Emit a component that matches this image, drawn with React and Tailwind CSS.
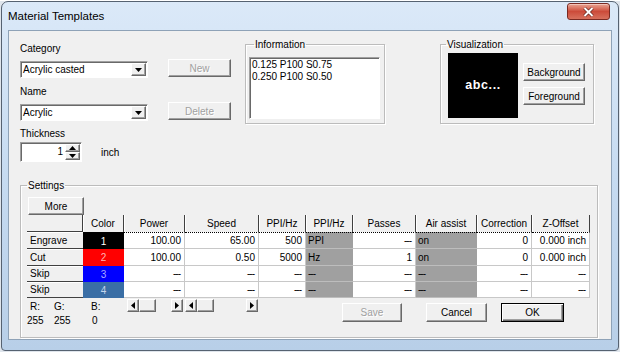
import React from 'react';

const raised =
  'bg-[#f0f0f0] border border-t-white border-l-white border-r-[#696969] border-b-[#696969] shadow-[inset_-1px_-1px_0_#a0a0a0]';
const sunken =
  'border border-t-[#a0a0a0] border-l-[#a0a0a0] border-r-white border-b-white shadow-[inset_1px_1px_0_#696969]';
const disabledText = 'text-[#a0a0a0] [text-shadow:1px_1px_0_#fff]';

const Tri = ({ dir = 'down' }) => {
  const pts = {
    down: '0,0 7,0 3.5,4',
    up: '0,4 7,4 3.5,0',
    left: '4,0 4,7 0,3.5',
    right: '0,0 0,7 4,3.5',
  }[dir];
  const vertical = dir === 'down' || dir === 'up';
  return (
    <svg width={vertical ? 7 : 4} height={vertical ? 4 : 7} viewBox={vertical ? '0 0 7 4' : '0 0 4 7'}>
      <polygon points={pts} fill="#000" />
    </svg>
  );
};

const Combo = ({ value }) => (
  <div className={`flex items-center w-[128px] h-[17px] bg-white ${sunken}`}>
    <span className="flex-1 pl-[2px] leading-[13px]">{value}</span>
    <div className={`flex items-center justify-center w-[15px] h-[13px] mr-[1px] ${raised}`}>
      <Tri dir="down" />
    </div>
  </div>
);

const Btn = ({ children, w, h = 18, disabled, className = '' }) => (
  <div
    className={`flex items-center justify-center leading-[13px] ${raised} ${disabled ? disabledText : ''} ${className}`}
    style={{ width: w, height: h }}
  >
    {children}
  </div>
);

const HScroll = ({ w }) => (
  <div className="flex h-[13px] bg-[#f0f0f0]" style={{ width: w }}>
    <div className={`flex items-center justify-center w-[12px] h-[13px] ${raised}`}>
      <Tri dir="left" />
    </div>
    <div className={`w-[17px] h-[13px] ${raised}`} />
    <div className="flex-1" />
    <div className={`flex items-center justify-center w-[12px] h-[13px] ${raised}`}>
      <Tri dir="right" />
    </div>
  </div>
);

const headers = ['Color', 'Power', 'Speed', 'PPI/Hz', 'PPI/Hz', 'Passes', 'Air assist', 'Correction', 'Z-Offset'];

const dash = '---';
const rows = [
  { name: 'Engrave', bg: 'bg-black', num: '1', fg: 'text-white', power: '100.00', speed: '65.00', ppi: '500', mode: 'PPI', passes: dash, air: 'on', corr: '0', z: '0.000 inch' },
  { name: 'Cut', bg: 'bg-[#ff0000]', num: '2', fg: 'text-[#ffb4b4]', power: '100.00', speed: '0.50', ppi: '5000', mode: 'Hz', passes: '1', air: 'on', corr: '0', z: '0.000 inch' },
  { name: 'Skip', bg: 'bg-[#0000ff]', num: '3', fg: 'text-[#a9a9ff]', power: dash, speed: dash, ppi: dash, mode: dash, passes: dash, air: dash, corr: dash, z: dash },
  { name: 'Skip', bg: 'bg-[#3a6ea5]', num: '4', fg: 'text-[#c4d6ec]', power: dash, speed: dash, ppi: dash, mode: dash, passes: dash, air: dash, corr: dash, z: dash },
];

const Dash = ({ v }) =>
  v === dash ? <span className="tracking-[-1px] pr-[1px]">{v}</span> : <span>{v}</span>;

function Grid() {
  return (
    <div className="grid grid-cols-[56px_41px_61px_74px_47px_47px_63px_61px_55px_58px] grid-rows-[17px_17px_17px_16px_16px] w-[563px]">
      <div className="bg-[#f0f0f0] border-r border-b border-[#404040]" />
      {headers.map((h, i) => (
        <div key={i} className="flex items-center justify-center bg-[#f0f0f0] border-r border-[#404040] shadow-[inset_1px_0_0_#fff]">
          {h}
        </div>
      ))}
      {rows.map((r, ri) => {
        const top = ri === 0 ? 'border-t border-t-black [border-top-style:dotted]' : '';
        const white = `flex items-center justify-end pr-[3px] bg-white border-r border-b border-[#c8c8c8] ${top}`;
        const gray = `flex items-center pl-[2px] bg-[#a0a0a0] border-b border-b-[#bdbdbd] ${top}`;
        return (
          <React.Fragment key={ri}>
            <div className="flex items-center pl-[3px] bg-[#f0f0f0] border-b border-[#404040] shadow-[inset_0_1px_0_#fff]">
              {r.name}
            </div>
            <div className={`flex items-center justify-center ${r.bg} ${r.fg} ${top}`}>{r.num}</div>
            <div className={white}><Dash v={r.power} /></div>
            <div className={white}><Dash v={r.speed} /></div>
            <div className={white}><Dash v={r.ppi} /></div>
            <div className={gray}><Dash v={r.mode} /></div>
            <div className={white}><Dash v={r.passes} /></div>
            <div className={gray}><Dash v={r.air} /></div>
            <div className={white}><Dash v={r.corr} /></div>
            <div className={white}><Dash v={r.z} /></div>
          </React.Fragment>
        );
      })}
    </div>
  );
}

const groupBox = 'border border-[#bcbcbc] shadow-[inset_1px_1px_0_#fff,1px_1px_0_#fff]';

export default function App() {
  return (
    <div className="w-[620px] h-[352px] bg-[#dfe5ec] font-['Liberation_Sans',Arial,sans-serif] text-[10px] text-black">
      <div className="ml-[1px] mt-[1px] w-[618px] h-[350px] flex flex-col rounded-t-[7px] rounded-b-[4px] border border-[#566271] bg-gradient-to-b from-[#dbe9f8] via-[#c6dbf1] to-[#b8cfe8] px-[6px] pb-[9px]">
        {/* title bar */}
        <div className="flex items-start justify-between h-[28px]">
          <div className="pt-[7px] text-[11.5px] leading-[14px] text-black">Material Templates</div>
          <div className="mt-[1px] mr-[2px] flex items-center justify-center w-[43px] h-[17px] rounded-[3px] border border-[#7a2a22] bg-gradient-to-b from-[#e8a393] via-[#cc4b3a] to-[#d7705d] shadow-[inset_0_1px_0_#f3c4b8]">
            <svg width="11" height="10" viewBox="0 0 11 10">
              <path d="M1.5 1 L9.5 9 M9.5 1 L1.5 9" stroke="#5a1a12" strokeWidth="3.2" />
              <path d="M1.5 1 L9.5 9 M9.5 1 L1.5 9" stroke="#fff" strokeWidth="2" />
            </svg>
          </div>
        </div>

        {/* client area */}
        <div className="flex flex-col h-[310px] border border-[#8ea2b7] bg-[#f0f0f0]">
          <div className="flex h-[148px] pl-[11px]">
            <div className="flex flex-col w-[128px] pt-[11px]">
              <div className="h-[13px] leading-[13px]">Category</div>
              <div className="mt-[6px]"><Combo value="Acrylic casted" /></div>
              <div className="mt-[7px] h-[13px] leading-[13px]">Name</div>
              <div className="mt-[6px]"><Combo value="Acrylic" /></div>
              <div className="mt-[6px] h-[13px] leading-[13px]">Thickness</div>
              <div className="mt-[2px] flex items-center">
                <div className={`flex w-[62px] h-[20px] bg-white ${sunken}`}>
                  <span className="flex-1 text-right pr-[2px] leading-[17px]">1</span>
                  <div className="flex flex-col w-[15px] mr-[1px] mt-[1px]">
                    <div className={`flex items-center justify-center h-[8px] ${raised}`}><Tri dir="up" /></div>
                    <div className={`flex items-center justify-center h-[8px] ${raised}`}><Tri dir="down" /></div>
                  </div>
                </div>
                <span className="ml-[19px]">inch</span>
              </div>
            </div>

            <div className="flex flex-col ml-[20px] pt-[28px]">
              <Btn w={63} disabled>New</Btn>
              <Btn w={63} disabled className="mt-[25px]">Delete</Btn>
            </div>

            <fieldset className={`ml-[14px] mt-[7px] w-[140px] h-[86px] ${groupBox}`}>
              <legend className="ml-[8px] px-[1px] leading-[13px]">Information</legend>
              <div className={`ml-[3px] mt-[6px] w-[131px] h-[62px] bg-white ${sunken} pl-[2px] pt-[1px] leading-[12px]`}>
                <div>0.125 P100 S0.75</div>
                <div>0.250 P100 S0.50</div>
              </div>
            </fieldset>

            <fieldset className={`ml-[55px] mt-[7px] w-[154px] h-[86px] ${groupBox}`}>
              <legend className="ml-[5px] px-[1px] leading-[13px]">Visualization</legend>
              <div className="flex">
                <div className="ml-[7px] mt-[2px] flex items-center justify-center w-[70px] h-[65px] bg-black text-white text-[12.5px] font-bold tracking-[0.6px]">
                  abc...
                </div>
                <div className="ml-[5px] mt-[12px] flex flex-col gap-[6px]">
                  <Btn w={62}>Background</Btn>
                  <Btn w={62}>Foreground</Btn>
                </div>
              </div>
            </fieldset>
          </div>

          <fieldset className={`ml-[11px] w-[578px] h-[159px] ${groupBox}`}>
            <legend className="ml-[6px] px-[1px] leading-[13px]">Settings</legend>
            <Btn w={56} className="ml-[7px] mt-[5px]">More</Btn>
            <div className="ml-[6px]">
              <Grid />
            </div>
            <div className="ml-[6px] flex items-start">
              <div className="w-[100px] grid grid-cols-[27px_37px_36px] leading-[13px]">
                <div className="mt-[2px] pl-[3px]">R:</div>
                <div className="mt-[2px]">G:</div>
                <div className="mt-[2px]">B:</div>
                <div className="mt-[1px]">255</div>
                <div className="mt-[1px]">255</div>
                <div className="mt-[1px] pl-[1px]">0</div>
              </div>
              <div className="mt-[1px]"><HScroll w={56} /></div>
              <div className="mt-[1px] ml-[2px]"><HScroll w={73} /></div>
              <Btn w={60} h={19} disabled className="ml-[84px] mt-[5px]">Save</Btn>
              <Btn w={61} h={19} className="ml-[24px] mt-[5px]">Cancel</Btn>
              <div className="ml-[14px] mt-[5px] w-[63px] h-[19px] flex items-center justify-center border border-black bg-[#f0f0f0] shadow-[inset_1px_1px_0_#fff,inset_-1px_-1px_0_#696969,inset_-2px_-2px_0_#a0a0a0]">
                OK
              </div>
            </div>
          </fieldset>
        </div>
      </div>
    </div>
  );
}
